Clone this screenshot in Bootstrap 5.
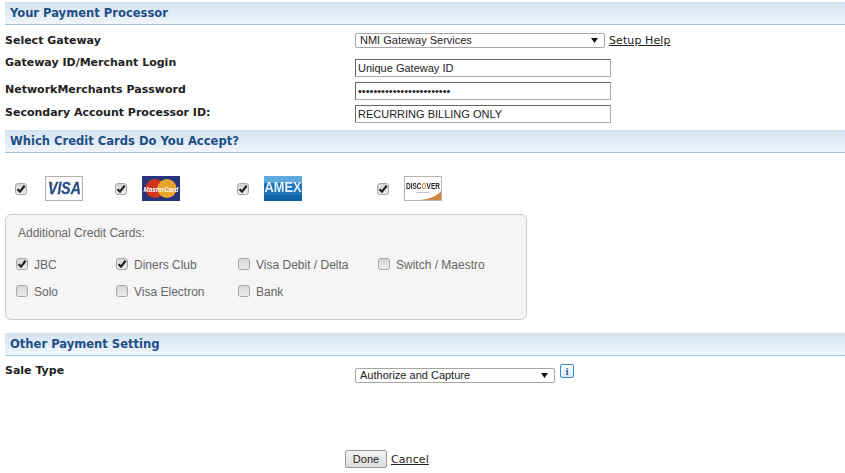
<!DOCTYPE html>
<html lang="en">
<head>
  <meta charset="UTF-8">
  <title>Payment Settings</title>
  <meta name="viewport" content="width=device-width, initial-scale=1">
  <link href="https://cdn.jsdelivr.net/npm/bootstrap@5.3.3/dist/css/bootstrap.min.css" rel="stylesheet">
  <style>
    body {
      background: #fff;
      font-family: "DejaVu Sans", Verdana, sans-serif;
      font-size: 11px;
      color: #222;
      overflow: hidden;
    }
    .pay-wrap {
      padding: 2px 0 0 5px;
      height: 473px;
    }
    .sec-head {
      height: 23px;
      line-height: 22px;
      padding-left: 5px;
      font-family: "DejaVu Sans Condensed", "DejaVu Sans", sans-serif;
      font-stretch: condensed;
      font-size: 12.85px;
      font-weight: 700;
      color: #1d4f86;
      background: linear-gradient(#d4e3f1, #eff5fa);
      border-bottom: 1px solid #9cc4e6;
    }
    .pay-row { display: flex; }
    .pay-label {
      width: 350px;
      font-weight: 700;
      font-size: 11px;
      line-height: 15px;
      color: #222;
    }
    .pay-field {
      font-family: "Liberation Sans", Arial, sans-serif;
      font-size: 11px;
      height: 18px;
      width: 256px;
      padding: 0 2px;
      color: #222;
      border: 1px solid #aaa;
      border-top-color: #666;
      border-left-color: #666;
      border-radius: 0;
      outline: none;
    }
    .pay-select {
      font-family: "Liberation Sans", Arial, sans-serif;
      font-size: 11px;
      line-height: 13px;
      height: 15px;
      padding: 0 0 0 4px;
      color: #222;
      background: #fff url("data:image/svg+xml,%3Csvg xmlns='http://www.w3.org/2000/svg' width='7' height='5'%3E%3Cpath d='M0 0h7L3.5 5z' fill='%23111'/%3E%3C/svg%3E") no-repeat right 6px center;
      border: 1px solid #a5a5a5;
      border-radius: 2px;
      appearance: none;
      outline: none;
    }
    .pay-link {
      font-size: 11px;
      line-height: 15px;
      letter-spacing: .1px;
      color: #222;
    }
    .cb-box {
      appearance: none;
      flex: none;
      width: 12px;
      height: 12px;
      margin: 0;
      border: 1px solid #a8a8a8;
      border-radius: 3px;
      background: linear-gradient(#d6d6d6, #ececec);
    }
    .cb-box:checked {
      background: url("data:image/svg+xml,%3Csvg xmlns='http://www.w3.org/2000/svg' width='10' height='10'%3E%3Cpath d='M1.5 5.2 4 7.6 8.6 1.8' fill='none' stroke='%23222' stroke-width='2.2'/%3E%3C/svg%3E") no-repeat center, linear-gradient(#d6d6d6, #ececec);
    }
    .cc-grid {
      display: grid;
      grid-template-columns: 100px 122px 140px 1fr;
    }
    .cc-logo { display: block; width: 38px; height: 25px; filter: blur(.3px); }
    .cc-panel {
      width: 522px;
      height: 106px;
      background: #f5f5f5;
      border: 1px solid #ccc;
      border-radius: 6px;
      padding: 10px 10px 0;
      font-family: "Liberation Sans", Arial, sans-serif;
      font-size: 12px;
      color: #666;
    }
    .cc-title { padding: 1px 2px 0; line-height: 14px; }
    .cc-opt { display: flex; align-items: center; gap: 6px; height: 14px; }
    .cc-opt .cb-box { margin-bottom: 3px; }
    .info-ico {
      display: flex;
      align-items: center;
      justify-content: center;
      width: 14px;
      height: 14px;
      margin: 1px 0 0 5px;
      border: 1px solid #3a8ad6;
      border-radius: 2px;
      background: linear-gradient(#fff, #dcebf9);
      color: #1a66b5;
      font: 700 11px "Liberation Serif", serif;
    }
    .done-btn {
      font-family: "Liberation Sans", Arial, sans-serif;
      font-size: 11px;
      width: 42px;
      height: 18px;
      padding: 0;
      color: #222;
      border: 1px solid #999;
      border-radius: 2px;
      background: linear-gradient(#f4f4f4, #dcdcdc);
    }
    .gw-top { height: 15px; }
    .select-gw { width: 250px; }
    .select-sale { width: 200px; margin-top: 5px; }
    .gw-row { margin-top: 5px; }
    .gw-first { margin-top: 7px; }
    .gw-first .pay-field { margin-top: 4px; }
    .head-cards { margin-top: 7px; }
    .logo-grid { margin: 23px 0 13px 10px; }
    .logo-gap { gap: 15px; }
    .logo-gap-first { gap: 18px; }
    .opt-grid { margin-top: 18px; row-gap: 13px; }
    .head-other { margin-top: 13px; }
    .sale-row { margin-top: 7px; }
    .done-row { margin: 67px 0 0 340px; gap: 4px; }
  </style>
</head>
<body>
<form class="pay-wrap">
  <div class="sec-head">Your Payment Processor</div>

  <div class="pay-row gw-top mt-2">
    <div class="pay-label">Select Gateway</div>
    <select class="pay-select select-gw"><option>NMI Gateway Services</option></select>
    <a href="#" class="pay-link ms-1">Setup Help</a>
  </div>
  <div class="pay-row gw-first">
    <div class="pay-label">Gateway ID/Merchant Login</div>
    <input class="pay-field" type="text" value="Unique Gateway ID">
  </div>
  <div class="pay-row gw-row">
    <div class="pay-label">NetworkMerchants Password</div>
    <input class="pay-field" type="password" value="xxxxxxxxxxxxxxxxxxxxxxxx">
  </div>
  <div class="pay-row gw-row">
    <div class="pay-label">Secondary Account Processor ID:</div>
    <input class="pay-field" type="text" value="RECURRING BILLING ONLY">
  </div>

  <div class="sec-head head-cards">Which Credit Cards Do You Accept?</div>

  <div class="cc-grid logo-grid">
    <div class="d-flex align-items-center logo-gap-first">
      <input class="cb-box" type="checkbox" checked>
      <svg class="cc-logo" viewBox="0 0 38 25"><rect x=".5" y=".5" width="37" height="24" fill="#fdfdfd" stroke="#b5b0a2"/><path d="M2.500 6.500h5l1 4C7 8.500 5 7.500 2.500 6.500z" fill="#d9a441"/><text transform="translate(3 18) scale(.857 1)" font-family="Liberation Sans" font-size="16.500" font-weight="700" font-style="italic" fill="#2a4f86" stroke="#2a4f86" stroke-width=".3">VISA</text></svg>
    </div>
    <div class="d-flex align-items-center logo-gap">
      <input class="cb-box" type="checkbox" checked>
      <svg class="cc-logo" viewBox="0 0 38 25"><rect width="38" height="25" fill="#27337a"/><circle cx="13" cy="12.500" r="9.500" fill="#d2351f"/><circle cx="25" cy="12.500" r="9.500" fill="#e8a52e"/><text transform="translate(1.500 15.500) scale(.795 1)" font-family="Liberation Sans" font-size="8" font-weight="700" font-style="italic" fill="#fff">MasterCard</text></svg>
    </div>
    <div class="d-flex align-items-center logo-gap">
      <input class="cb-box" type="checkbox" checked>
      <svg class="cc-logo" viewBox="0 0 38 25"><rect width="38" height="25" fill="#1d74b8"/><rect width="38" height="7" fill="#5fa8dc"/><rect y="19" width="38" height="6" fill="#0f62a6"/><text transform="translate(.5 16) scale(.928 1)" font-family="Liberation Sans" font-size="13.800" font-weight="700" fill="#e3f1fb">AMEX</text></svg>
    </div>
    <div class="d-flex align-items-center logo-gap">
      <input class="cb-box" type="checkbox" checked>
      <svg class="cc-logo" viewBox="0 0 38 25"><rect x=".5" y=".5" width="37" height="24" fill="#fff" stroke="#b9b4aa"/><path d="M37 15V24H16C26 23 33 20 37 15z" fill="#d08742"/><text transform="translate(2 12.500) scale(.766 1)" font-family="Liberation Sans" font-size="8.500" font-weight="700" fill="#222">DISC<tspan fill="#e08a2e">O</tspan>VER</text><text x="19" y="17" text-anchor="middle" font-family="Liberation Sans" font-size="2.500" fill="#666">NETWORK</text></svg>
    </div>
  </div>

  <div class="cc-panel">
    <div class="cc-title">Additional Credit Cards:</div>
    <div class="cc-grid opt-grid">
      <label class="cc-opt"><input class="cb-box" type="checkbox" checked>JBC</label>
      <label class="cc-opt"><input class="cb-box" type="checkbox" checked>Diners Club</label>
      <label class="cc-opt"><input class="cb-box" type="checkbox">Visa Debit / Delta</label>
      <label class="cc-opt"><input class="cb-box" type="checkbox">Switch / Maestro</label>
      <label class="cc-opt"><input class="cb-box" type="checkbox">Solo</label>
      <label class="cc-opt"><input class="cb-box" type="checkbox">Visa Electron</label>
      <label class="cc-opt"><input class="cb-box" type="checkbox">Bank</label>
    </div>
  </div>

  <div class="sec-head head-other">Other Payment Setting</div>

  <div class="pay-row sale-row">
    <div class="pay-label">Sale Type</div>
    <select class="pay-select select-sale"><option>Authorize and Capture</option></select>
    <span class="info-ico">i</span>
  </div>

  <div class="d-flex align-items-center done-row">
    <button type="button" class="done-btn">Done</button>
    <a href="#" class="pay-link">Cancel</a>
  </div>
</form>
<script src="https://cdn.jsdelivr.net/npm/bootstrap@5.3.3/dist/js/bootstrap.bundle.min.js"></script>
</body>
</html>
